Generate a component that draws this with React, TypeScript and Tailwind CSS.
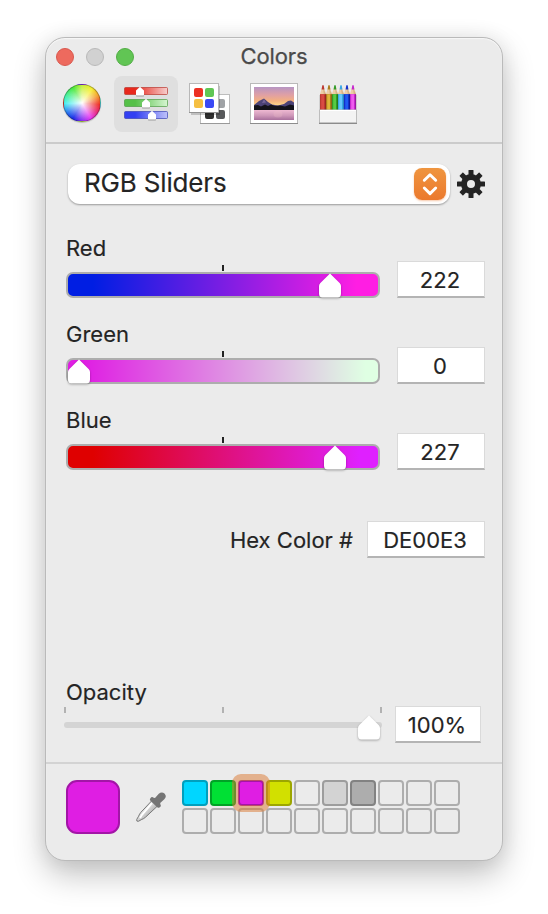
import React from "react";

const HOUSE = "M11 0.5 L20.6 10.2 Q22 11.6 22 13.2 V21 Q22 25 18.6 25 H3.4 Q0 25 0 21 V13.2 Q0 11.6 1.4 10.2 Z";

function Thumb({ className }: { className: string }) {
  return (
    <svg viewBox="0 0 22 25" preserveAspectRatio="none" className={`absolute h-[24.5px] w-[22px] overflow-visible drop-shadow-[0_1px_1px_rgba(0,0,0,0.3)] ${className}`}>
      <path d={HOUSE} fill="#fff" />
    </svg>
  );
}

function Field({ value, className }: { value: string; className: string }) {
  return (
    <div className={`flex items-center justify-center border border-b-2 border-[#dadada] border-b-[#b4b4b4] bg-white pt-px pr-0.5 text-[22px] leading-none text-[#242424] [-webkit-text-stroke:0.15px_#242424] ${className}`}>
      <span>{value}</span>
    </div>
  );
}

function ColorRow({ label, value, gradient, thumb }: { label: string; value: string; gradient: string; thumb: string }) {
  return (
    <div className="flex h-[86px] pl-5">
      <div className="w-[314px]">
        <div className="h-[33px] text-[22px] leading-[32px] text-[#242424] [-webkit-text-stroke:0.15px_#242424]">{label}</div>
        <div className="ml-[156px] h-1.5 w-0.5 bg-[#222]" />
        <div className={`relative mt-px h-[26px] rounded-[7px] border-2 border-[#adadad] ${gradient}`}>
          <Thumb className={`-top-[1.5px] ${thumb}`} />
        </div>
      </div>
      <Field value={value} className="mt-[29px] ml-[17px] h-[37px] w-[88px]" />
    </div>
  );
}

function WheelIcon() {
  return (
    <div className="size-[38px] rounded-full border border-black/30 bg-[radial-gradient(circle,#fff_0%,rgba(255,255,255,0.65)_22%,rgba(255,255,255,0)_68%),conic-gradient(from_0deg,#c8f040,#f6ee30_35deg,#f4a030_65deg,#ee3028_95deg,#e82c78_120deg,#e83cf0_150deg,#8a32f4_180deg,#1c30e8_210deg,#2870f0_235deg,#4ceef0_268deg,#48f0a0_295deg,#4ce83c_330deg,#c8f040)] shadow-[0_1px_1px_rgba(0,0,0,0.2)]" />
  );
}

function SlidersIcon() {
  const bars = [
    { y: 0, id: "r", from: "#e8281c", to: "#f6cfce", edge: "#b8372f", x: 12 },
    { y: 12, id: "g", from: "#55c048", to: "#d6f5d2", edge: "#4d9b45", x: 18 },
    { y: 24, id: "b", from: "#3340f2", to: "#bfc2fa", edge: "#3b43b5", x: 24 },
  ];
  return (
    <svg viewBox="0 0 44 36" className="h-9 w-11 overflow-visible">
      <defs>
        {bars.map((b) => (
          <linearGradient id={b.id} key={b.id}>
            <stop offset="0.25" stopColor={b.from} />
            <stop offset="1" stopColor={b.to} />
          </linearGradient>
        ))}
      </defs>
      {bars.map((b) => (
        <g key={b.id}>
          <rect x="0.5" y={b.y + 0.5} width="43" height="7" rx="1" fill={`url(#${b.id})`} stroke={b.edge} strokeOpacity="0.7" />
          <path transform={`translate(${b.x} ${b.y + 1})`} d="M4 -0.6 L8 3.2 V7.4 Q8 8.6 6.8 8.6 H1.2 Q0 8.6 0 7.4 V3.2 Z" fill="#000" opacity="0.3" />
          <path transform={`translate(${b.x} ${b.y})`} d="M4 -0.3 L8 3.6 V7.4 Q8 8.6 6.8 8.6 H1.2 Q0 8.6 0 7.4 V3.6 Z" fill="#fff" />
        </g>
      ))}
    </svg>
  );
}

function PalettesIcon() {
  return (
    <svg viewBox="0 0 41 41" className="size-[41px] overflow-visible">
      <rect x="11.5" y="11.5" width="29" height="29" fill="#fff" stroke="#bdbdbd" />
      <path d="M11 40.5h30" stroke="#999" />
      <rect x="27" y="16" width="9" height="9" rx="2" fill="#a0a3a6" />
      <rect x="16" y="27" width="9" height="9" rx="2" fill="#303030" />
      <rect x="27" y="27" width="9" height="9" rx="2" fill="#58595b" />
      <rect x="2" y="3" width="29" height="29" fill="#000" opacity="0.18" />
      <rect x="0.5" y="0.5" width="29" height="29" fill="#fff" stroke="#b8b8b8" />
      <path d="M0 29.5h30" stroke="#929292" />
      <rect x="5" y="5" width="9" height="9" rx="2" fill="#ec3023" />
      <rect x="16" y="5" width="9" height="9" rx="2" fill="#60c654" />
      <rect x="5" y="16" width="9" height="9" rx="2" fill="#f5bf42" />
      <rect x="16" y="16" width="9" height="9" rx="2" fill="#3a49f5" />
    </svg>
  );
}

function LandscapeIcon() {
  return (
    <svg viewBox="0 0 48 41" className="h-[41px] w-12">
      <defs>
        <linearGradient id="sky" x2="0" y2="1">
          <stop offset="0" stopColor="#b795c3" />
          <stop offset="0.35" stopColor="#e0a0a4" />
          <stop offset="0.6" stopColor="#f3b080" />
          <stop offset="0.85" stopColor="#ffe18c" />
        </linearGradient>
        <linearGradient id="lake" x2="0" y2="1">
          <stop offset="0" stopColor="#efb9d2" />
          <stop offset="0.55" stopColor="#cf98b9" />
          <stop offset="1" stopColor="#a86f9c" />
        </linearGradient>
      </defs>
      <rect x="0.5" y="0.5" width="47" height="40" fill="#fff" stroke="#b9b9b9" />
      <path d="M0 40.5h48" stroke="#8d8d8d" />
      <rect x="4" y="4" width="40" height="23" fill="url(#sky)" />
      <path d="M4 22 L9 18 L14 15.5 L18 19 L22 21.5 L28 22.5 L34 21 L38 18 L41 17.5 L44 19.5 V27 H4Z" fill="#4c4377" />
      <path d="M14 16 L12 20 L16 19.5 Z" fill="#76659a" />
      <path d="M4 22.5 L8 22 L11 23.5 L15 21.5 L18 23 L21 21.5 L25 23 L30 22.5 L35 23.5 L40 21.5 L44 22.5 V27 H4Z" fill="#14131b" />
      <rect x="4" y="27" width="40" height="10" fill="url(#lake)" />
      <ellipse cx="28" cy="31" rx="4.5" ry="3.5" fill="#f2c5cb" opacity="0.25" />
    </svg>
  );
}

function PencilsIcon() {
  const pencils = [
    ["#bb3932", "#d94a43", "#8e211d"],
    ["#ac7c1c", "#dfb53a", "#806012"],
    ["#329b28", "#56cc44", "#217018"],
    ["#39a7e6", "#66c9fb", "#257aae"],
    ["#1530ca", "#1e5bf2", "#0b168a"],
    ["#c629ce", "#ef5bee", "#86178d"],
  ];
  return (
    <svg viewBox="0 0 38 39" className="h-[39px] w-[38px] overflow-visible">
      {pencils.map((p, i) => (
        <g key={p[0]} transform={`translate(${1 + i * 6} 0)`}>
          <path d="M0 9 L2.2 2 H3.8 L6 9 V11 H0Z" fill="#edcda6" />
          <path d="M3 3 L6 9 V11 H4Z" fill="#bd925f" opacity="0.45" />
          <path d="M1.6 4.4 L2.2 0.7 Q3 -0.6 3.8 0.7 L4.4 4.4Z" fill={p[0]} />
          <path d="M0 9.3 Q1 8.5 2 9.3 Q3 8.5 4 9.3 Q5 8.5 6 9.3 V26 H0Z" fill={p[0]} />
          <path d="M2.6 9.3V26" stroke={p[1]} strokeWidth="2.8" />
          <path d="M5.6 9.3V26" stroke={p[2]} strokeWidth="0.8" />
        </g>
      ))}
      <path d="M0.5 10V25M37.5 10V25" stroke="#bbb" opacity="0.5" />
      <rect x="0.5" y="25" width="37" height="13" fill="#f3f3f3" stroke="#bdbdbd" />
      <path d="M1 25.5h36" stroke="#fff" />
      <path d="M0 38.3h38" stroke="#8b8b8b" strokeWidth="1.3" />
    </svg>
  );
}

function Gear() {
  return (
    <svg viewBox="-14 -14 28 28" className="ml-[7px] size-7">
      <g fill="#242424">
        {[0, 45, 90, 135, 180, 225, 270, 315].map((a) => (
          <rect key={a} x="-2.5" y="-14" width="5" height="7" rx="0.6" transform={`rotate(${a})`} />
        ))}
      </g>
      <circle r="7" fill="none" stroke="#242424" strokeWidth="6" />
    </svg>
  );
}

function Eyedropper() {
  return (
    <svg viewBox="0 0 30 30" className="ml-4 size-[30px]">
      <defs>
        <linearGradient id="glass" x1="0" y1="0" x2="1" y2="1">
          <stop offset="0.3" stopColor="#f7f7f7" />
          <stop offset="0.55" stopColor="#c9c9c9" />
          <stop offset="0.8" stopColor="#989898" />
        </linearGradient>
      </defs>
      <path d="M16.2 8.3 L21.7 13.8 L9.5 25.2 Q7.8 26.8 5.8 27.4 L2.4 29.3 Q0.2 29.7 0.7 27.5 L2.6 24.2 Q3.4 22 5 20.2 Z" fill="url(#glass)" stroke="#777" strokeWidth="1" />
      <path d="M16 11.2 L6 22.8 L4 26" stroke="#fff" strokeWidth="1.8" fill="none" />
      <path d="M14.3 6.4 Q15.8 4.2 17.6 5.7 L19 6 L22.8 1.8 Q25.5 -0.8 28.5 1.4 Q31.2 4.5 28.3 7.2 L24.2 11.1 L24.4 12.5 Q25.6 14.3 23.4 15.6 Q22 16.2 20.9 15 L14.7 9 Q13.3 7.8 14.3 6.4Z" fill="#757575" />
    </svg>
  );
}

const SWATCHES = [
  "bg-[#00d6ff] border-[#009fbd]",
  "bg-[#00e034] border-[#00a226]",
  "bg-[#df1ee3] border-[#a315a7]",
  "bg-[#d2e000] border-[#9ca600]",
  "border-[#adadad]",
  "bg-[#d3d3d3] border-[#9d9d9d]",
  "bg-[#adadad] border-[#828282]",
  ...Array(13).fill("border-[#adadad]"),
];

export default function App() {
  return (
    <div className="h-[914px] w-[548px] overflow-hidden bg-white pt-[37px] pl-[45px] font-['Inter','Liberation_Sans',sans-serif]">
      <div className="h-[824px] w-[458px] rounded-[20px] border border-[#bababa] bg-[#ebebeb] shadow-[0_14px_32px_rgba(0,0,0,0.24),0_0_20px_rgba(0,0,0,0.07),inset_0_1px_1px_#f8f8f8]">
        <header className="h-[106px] border-b-2 border-[#cbcbcb]">
          <div className="grid h-[38px] grid-cols-[1fr_auto_1fr] items-center">
            <div className="flex gap-3 pl-2.5">
              <div className="size-[18px] rounded-full border border-[#d9584e] bg-[#ed6a5e]" />
              <div className="size-[18px] rounded-full border border-[#b9b9b9] bg-[#d1d1d1]" />
              <div className="size-[18px] rounded-full border border-[#52ad45] bg-[#61c554]" />
            </div>
            <h1 className="pb-0.5 text-[22px] leading-none tracking-[-0.1px] text-[#4a4a4a] [-webkit-text-stroke:0.25px_#4a4a4a]">Colors</h1>
          </div>
          <div className="flex pl-[17px]">
            <div className="pt-2"><WheelIcon /></div>
            <div className="ml-[13px] flex h-14 w-16 justify-center rounded-lg bg-[#dfdfdf] pt-[11px]"><SlidersIcon /></div>
            <div className="ml-[11px] pt-[7px]"><PalettesIcon /></div>
            <div className="ml-5 pt-[7px]"><LandscapeIcon /></div>
            <div className="ml-[21px] pt-[9px]"><PencilsIcon /></div>
          </div>
        </header>

        <main className="h-[618px] pt-5">
          <div className="flex items-center pl-[22px]">
            <div className="flex h-10 w-[382px] items-center justify-between rounded-xl bg-white pr-1 pl-4 shadow-[0_1px_2px_rgba(0,0,0,0.35)]">
              <span className="pb-0.5 text-[26px] leading-none tracking-[-0.16px] text-[#242424] [-webkit-text-stroke:0.15px_#242424]">RGB Sliders</span>
              <div className="flex size-8 items-center justify-center rounded-lg bg-linear-to-b from-[#ef953f] to-[#eb792d] shadow-[0_1px_2px_rgba(235,121,45,0.4)]">
                <svg viewBox="0 0 32 32" className="size-8" fill="none" stroke="#fff" strokeWidth="2.9" strokeLinecap="round" strokeLinejoin="round">
                  <path d="M10.3 12.3 L16 6.7 L21.7 12.3 M10.3 20 L16 25.6 L21.7 20" />
                </svg>
              </div>
            </div>
            <Gear />
          </div>

          <div className="pt-7">
            <ColorRow label="Red" value="222" gradient="bg-[linear-gradient(90deg,#001ee3_8%,#df1ee3_84%,#ff1ee3_93%)]" thumb="left-[251px]" />
            <ColorRow label="Green" value="0" gradient="bg-[linear-gradient(90deg,#df1ee3_5%,#dfffe3_96%)]" thumb="left-0" />
            <ColorRow label="Blue" value="227" gradient="bg-[linear-gradient(90deg,#df0000_8%,#df1ee3_86%,#df20ff_94%)]" thumb="left-[256px]" />
          </div>

          <div className="flex items-center justify-end pt-[31px] pr-[17px]">
            <span className="mr-3.5 text-[22px] leading-none text-[#242424] [-webkit-text-stroke:0.15px_#242424]">Hex Color #</span>
            <Field value="DE00E3" className="h-[37px] w-[118px]" />
          </div>

          <div className="mt-[118px] flex pl-[18px]">
            <div className="w-[318px]">
              <div className="h-[31px] pl-0.5 text-[22px] leading-[32px] text-[#242424] [-webkit-text-stroke:0.15px_#242424]">Opacity</div>
              <div className="flex h-1.5 justify-between">
                <div className="w-0.5 bg-[#b2b2b2]" />
                <div className="w-0.5 bg-[#b2b2b2]" />
                <div className="w-0.5 bg-[#b2b2b2]" />
              </div>
              <div className="relative mt-[9px] h-1.5 rounded-full bg-[#d4d4d4]">
                <Thumb className="-top-[7.5px] left-[294px]" />
              </div>
            </div>
            <Field value="100%" className="mt-[30px] ml-[13px] h-[37px] w-[86px]" />
          </div>
        </main>

        <footer className="flex items-center border-t-2 border-[#d3d3d3] pt-4 pl-5">
          <div className="size-[54px] rounded-[11px] border-2 border-[#a315a7] bg-[#df1ee3]" />
          <Eyedropper />
          <div className="ml-4 grid grid-cols-10 gap-0.5">
            {SWATCHES.map((c, i) => (
              <div key={i} className={`relative size-[26px] rounded-[4px] border-2 ${c}`}>
                {i === 2 && <div className="absolute -inset-2 z-10 rounded-[9px] border-[7px] border-[#dc7830]/50" />}
              </div>
            ))}
          </div>
        </footer>
      </div>
    </div>
  );
}
